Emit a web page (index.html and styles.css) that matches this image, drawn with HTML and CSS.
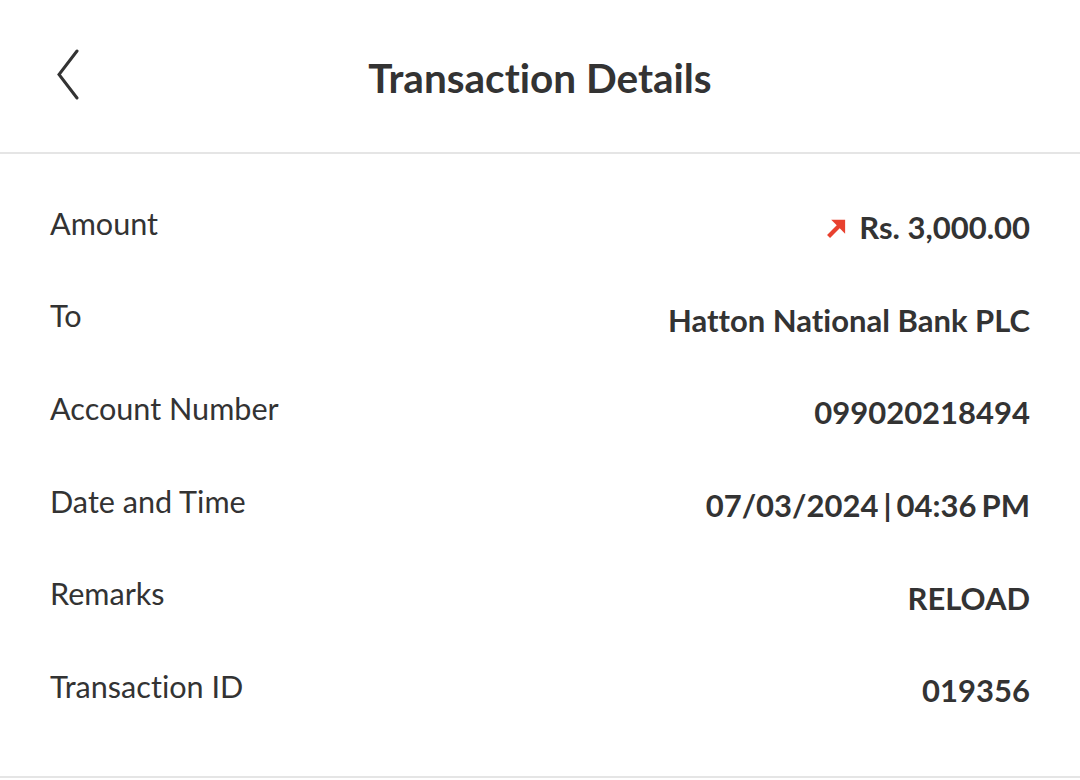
FILE: index.html
```html
<!DOCTYPE html>
<html lang="en">
<head>
<meta charset="utf-8">
<title>Transaction Details</title>
<link rel="stylesheet" href="styles.css">
</head>
<body>
<div class="screen">
  <header class="topbar">
    <button class="back" aria-label="Back">
      <svg width="24" height="52" viewBox="0 0 24 52"><polyline points="21,2 3,25.5 21,49" fill="none" stroke="#333" stroke-width="3" stroke-linecap="round" stroke-linejoin="miter"/></svg>
    </button>
    <h1 class="title">Transaction Details</h1>
  </header>
  <section class="details">
    <div class="row">
      <span class="label">Amount</span>
      <span class="value amount">
        <svg class="arrow" width="19" height="19" viewBox="0 0 18 18"><path d="M1.5 16.5 L12.5 5.5" stroke="#e8412f" stroke-width="4" stroke-linecap="butt"/><path d="M4 0.8 H17.2 V14 Z" fill="#e8412f"/></svg>
        <span>Rs. 3,000.00</span>
      </span>
    </div>
    <div class="row">
      <span class="label">To</span>
      <span class="value">Hatton National Bank PLC</span>
    </div>
    <div class="row">
      <span class="label">Account Number</span>
      <span class="value">099020218494</span>
    </div>
    <div class="row">
      <span class="label">Date and Time</span>
      <span class="value datetime">07/03/2024 | 04:36 PM</span>
    </div>
    <div class="row">
      <span class="label">Remarks</span>
      <span class="value">RELOAD</span>
    </div>
    <div class="row">
      <span class="label">Transaction ID</span>
      <span class="value">019356</span>
    </div>
  </section>
</div>
</body>
</html>
```

FILE: styles.css
```css
* { box-sizing: border-box; }
html, body { margin: 0; padding: 0; background: #fff; }
body {
  font-family: Lato, "Open Sans", sans-serif;
  color: #333;
  font-variant-ligatures: no-common-ligatures;
}
.screen { width: 1080px; height: 780px; overflow: hidden; }
.topbar {
  height: 154px;
  border-bottom: 2px solid #e5e5e5;
  display: flex;
  align-items: center;
  justify-content: center;
  position: relative;
}
.back {
  position: absolute;
  left: 56px;
  top: 49px;
  padding: 0;
  border: 0;
  background: none;
  line-height: 0;
}
.title {
  margin: 0;
  font-size: 40.5px;
  font-weight: 700;
  color: #333;
  padding-top: 2px;
}
.details {
  padding: 23px 50px 43px 50px;
  border-bottom: 2px solid #e5e5e5;
}
.row {
  height: 92.6px;
  display: flex;
  align-items: center;
  justify-content: space-between;
}
.label {
  font-size: 30.6px;
  font-weight: 400;
  color: #333;
}
.value {
  font-size: 31px;
  font-weight: 700;
  color: #333;
  padding-top: 8px;
}
.datetime { word-spacing: -2.5px; }
.amount { display: flex; align-items: center; gap: 13px; }
.arrow { flex: none; margin-top: 2px; }
```
